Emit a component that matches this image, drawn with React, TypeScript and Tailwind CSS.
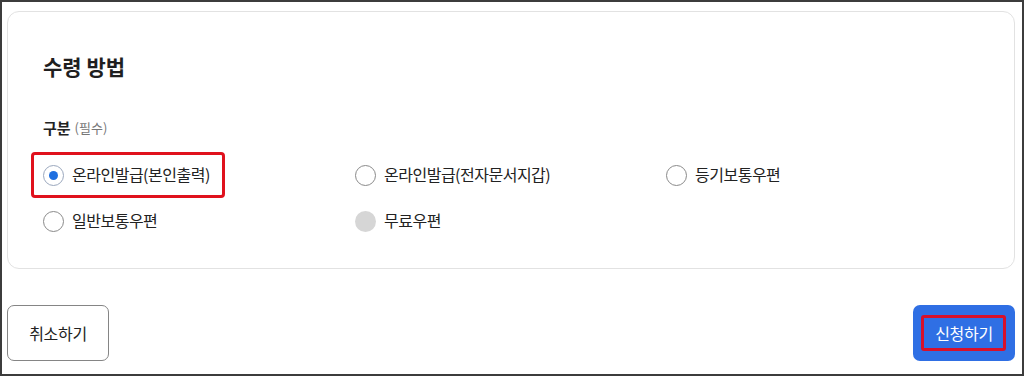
import React from "react";

const font = { fontFamily: '"Noto Sans CJK KR", "Noto Sans", sans-serif' };

function Radio({ state }: { state: "on" | "off" | "disabled" }) {
  if (state === "disabled") {
    return <span className="block w-[21px] h-[21px] rounded-full bg-[#d6d6d6] shrink-0" />;
  }
  return (
    <span
      className={
        "flex items-center justify-center w-[21px] h-[21px] rounded-full border shrink-0 bg-white " +
        (state === "on" ? "border-[#9aa7bd]" : "border-[#8a8a8a]")
      }
    >
      {state === "on" && <span className="block w-[9px] h-[9px] rounded-full bg-[#1f6fe0]" />}
    </span>
  );
}

function Option({
  label,
  state,
  highlight,
}: {
  label: string;
  state: "on" | "off" | "disabled";
  highlight?: boolean;
}) {
  return (
    <div className="relative flex items-center h-[32px] gap-[8px]">
      <Radio state={state} />
      <span className="text-[16px] leading-none text-[#222] tracking-[-0.5px] mb-[2px]">{label}</span>
      {highlight && (
        <span className="absolute left-[-12px] top-[-7px] w-[194px] h-[46px] border-[3px] border-[#e0111d] rounded-[4px] pointer-events-none" />
      )}
    </div>
  );
}

export default function App() {
  return (
    <div style={font} className="w-[1024px] h-[376px] border-2 border-[#3c3c3c] bg-white flex flex-col">
      <div className="ml-[5px] mt-[9px] w-[1008px] h-[258px] rounded-[12px] border border-[#e2e2e2] pl-[35px] pt-[40px]">
        <h2 className="text-[21px] leading-[28px] font-bold text-[#1f1f1f]">수령 방법</h2>
        <div className="mt-[38px] h-[20px] flex items-center">
          <span className="text-[15px] font-bold text-[#222]">구분</span>
          <span className="ml-[4px] text-[13px] text-[#777]">(필수)</span>
        </div>
        <div className="mt-[21px] grid grid-cols-[312px_311px_312px] gap-y-[14px]">
          <Option label="온라인발급(본인출력)" state="on" highlight />
          <Option label="온라인발급(전자문서지갑)" state="off" />
          <Option label="등기보통우편" state="off" />
          <Option label="일반보통우편" state="off" />
          <Option label="무료우편" state="disabled" />
        </div>
      </div>
      <div className="mt-[36px] ml-[5px] w-[1008px] flex justify-between">
        <button className="w-[102px] h-[56px] rounded-[7px] border border-[#858585] bg-white text-[16px] tracking-[-0.3px] text-[#222]">
          취소하기
        </button>
        <button className="relative w-[102px] h-[56px] rounded-[7px] bg-[#2f6fe4] text-[16px] tracking-[-0.3px] text-white">
          신청하기
          <span className="absolute left-[8px] right-[9px] top-[10px] bottom-[10px] border-[3px] border-[#d8102a] rounded-[3px]" />
        </button>
      </div>
    </div>
  );
}
